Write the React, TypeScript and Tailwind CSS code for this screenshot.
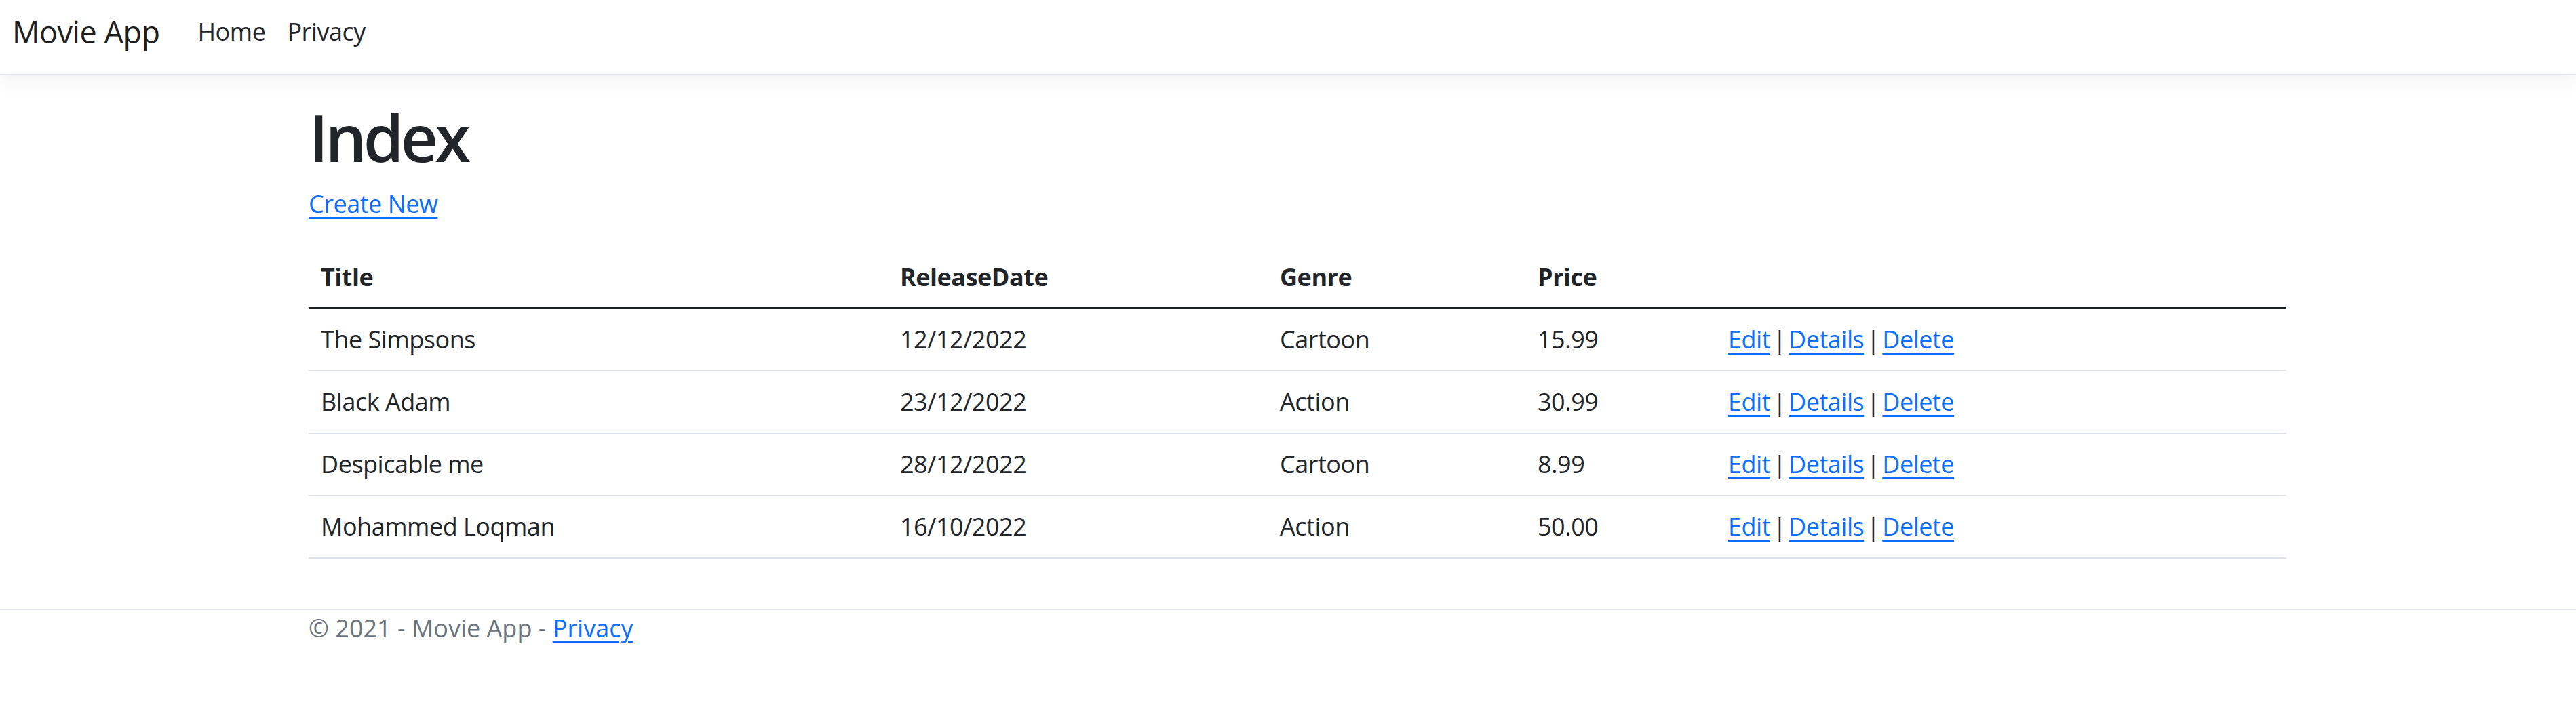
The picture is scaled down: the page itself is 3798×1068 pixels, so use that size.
import React from 'react';

type Movie = {
  title: string;
  releaseDate: string;
  genre: string;
  price: string;
};

const movies: Movie[] = [
  { title: 'The Simpsons', releaseDate: '12/12/2022', genre: 'Cartoon', price: '15.99' },
  { title: 'Black Adam', releaseDate: '23/12/2022', genre: 'Action', price: '30.99' },
  { title: 'Despicable me', releaseDate: '28/12/2022', genre: 'Cartoon', price: '8.99' },
  { title: 'Mohammed Loqman', releaseDate: '16/10/2022', genre: 'Action', price: '50.00' },
];

const linkCls = 'text-[#0d6efd] underline decoration-[3px] underline-offset-[6px]';

export default function App() {
  return (
    <div className="min-h-[1068px] bg-white font-['Open_Sans',sans-serif] tracking-[-0.03em] text-[#212529]">
      {/* Navbar */}
      <nav className="h-[111px] border-b-2 border-[#dee2e6] bg-white shadow-[0_9px_27px_rgba(0,0,0,0.05)]">
        <div className="flex items-center pl-[18px] pt-[13px]">
          <a href="#" className="mr-[40px] text-[45px] leading-[67.5px] text-black/90">
            Movie App
          </a>
          <ul className="flex">
            <li>
              <a href="#" className="block px-[16px] text-[36px] leading-[54px] text-[#212529]">
                Home
              </a>
            </li>
            <li>
              <a href="#" className="block px-[16px] text-[36px] leading-[54px] text-[#212529]">
                Privacy
              </a>
            </li>
          </ul>
        </div>
      </nav>

      {/* Main */}
      <main className="ml-[455px] mt-[33px] w-[2916px] pb-[38px]">
        <h1 className="mb-[15px] text-[96px] font-semibold leading-[115px] tracking-[-0.05em]">Index</h1>
        <p className="mb-[36px] text-[36px] leading-[54px]">
          <a href="#" className={linkCls}>
            Create New
          </a>
        </p>

        <table className="mb-[36px] w-full table-fixed border-collapse text-[36px] leading-[54px]">
          <colgroup>
            <col className="w-[854px]" />
            <col className="w-[560px]" />
            <col className="w-[380px]" />
            <col className="w-[281px]" />
            <col />
          </colgroup>
          <thead>
            <tr className="border-b-[3px] border-[#212529]">
              <th className="px-[18px] pt-[18px] pb-[17px] text-left font-bold">Title</th>
              <th className="px-[18px] pt-[18px] pb-[17px] text-left font-bold">ReleaseDate</th>
              <th className="px-[18px] pt-[18px] pb-[17px] text-left font-bold">Genre</th>
              <th className="px-[18px] pt-[18px] pb-[17px] text-left font-bold">Price</th>
              <th className="px-[18px] pt-[18px] pb-[17px]"></th>
            </tr>
          </thead>
          <tbody>
            {movies.map((m) => (
              <tr key={m.title} className="border-b-2 border-[#dee2e6]">
                <td className="p-[18px]">{m.title}</td>
                <td className="p-[18px]">{m.releaseDate}</td>
                <td className="p-[18px]">{m.genre}</td>
                <td className="p-[18px]">{m.price}</td>
                <td className="p-[18px]">
                  <a href="#" className={linkCls}>Edit</a>
                  <span className="mx-[-5px]">{' | '}</span>
                  <a href="#" className={linkCls}>Details</a>
                  <span className="mx-[-5px]">{' | '}</span>
                  <a href="#" className={linkCls}>Delete</a>
                </td>
              </tr>
            ))}
          </tbody>
        </table>
      </main>

      {/* Footer */}
      <footer className="border-t-2 border-[#dee2e6]">
        <div className="ml-[455px] text-[36px] leading-[54px] tracking-normal text-[#6c757d]">
          © 2021 - Movie App -{' '}
          <a href="#" className={linkCls}>
            Privacy
          </a>
        </div>
      </footer>
    </div>
  );
}
